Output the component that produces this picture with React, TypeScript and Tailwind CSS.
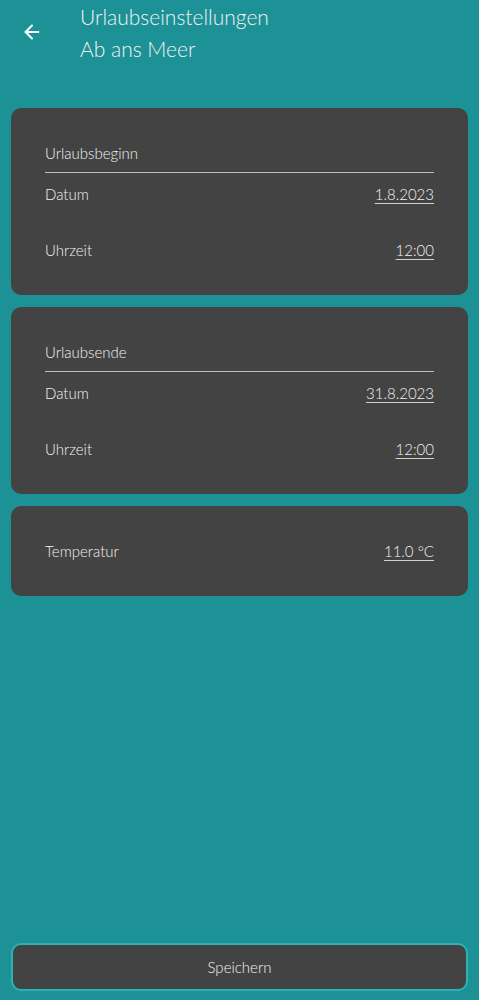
import { ArrowLeft } from 'lucide-react'

type Row = { label: string; value: string }

function Section({ title, rows }: { title?: string; rows: Row[] }) {
  return (
    <div className="bg-[#434343] rounded-[10px] px-[34px] pt-[34px] pb-[34px]">
      {title && (
        <div className="border-b border-[#bdbdbd] pb-[8px] mb-[10px] text-[15px] leading-[22px]">{title}</div>
      )}
      <div className="flex flex-col gap-[34px]">
        {rows.map((r) => (
          <div key={r.label} className="flex justify-between items-center text-[15px] leading-[22px]">
            <span>{r.label}</span>
            <span className="underline underline-offset-[3px] decoration-[#cfcfcf]">{r.value}</span>
          </div>
        ))}
      </div>
    </div>
  )
}

export default function App() {
  return (
    <div
      className="w-[479px] h-[1000px] bg-[#1c9196] text-[#f2f2f2] flex flex-col font-light"
      style={{ fontFamily: 'Lato, "Open Sans", sans-serif' }}
    >
      {/* Header */}
      <div className="flex h-[108px] items-start">
        <button className="w-[64px] h-[64px] flex items-center justify-center">
          <ArrowLeft className="w-[22px] h-[22px] text-white" strokeWidth={2.2} />
        </button>
        <div className="pl-[16px] pt-[2px]">
          <div className="text-[21px] leading-[30px]">Urlaubseinstellungen</div>
          <div className="text-[21px] leading-[34px]">Ab ans Meer</div>
        </div>
      </div>

      {/* Sections */}
      <div className="flex flex-col gap-[12px] px-[11px]">
        <Section
          title="Urlaubsbeginn"
          rows={[
            { label: 'Datum', value: '1.8.2023' },
            { label: 'Uhrzeit', value: '12:00' },
          ]}
        />
        <Section
          title="Urlaubsende"
          rows={[
            { label: 'Datum', value: '31.8.2023' },
            { label: 'Uhrzeit', value: '12:00' },
          ]}
        />
        <Section rows={[{ label: 'Temperatur', value: '11.0 °C' }]} />
      </div>

      <div className="flex-1" />

      {/* Save */}
      <div className="px-[11px] pb-[9px]">
        <button className="w-full h-[48px] bg-[#444343] rounded-[10px] border-2 border-[#2bb3b8] text-[15px] text-[#f2f2f2]">
          Speichern
        </button>
      </div>
    </div>
  )
}
